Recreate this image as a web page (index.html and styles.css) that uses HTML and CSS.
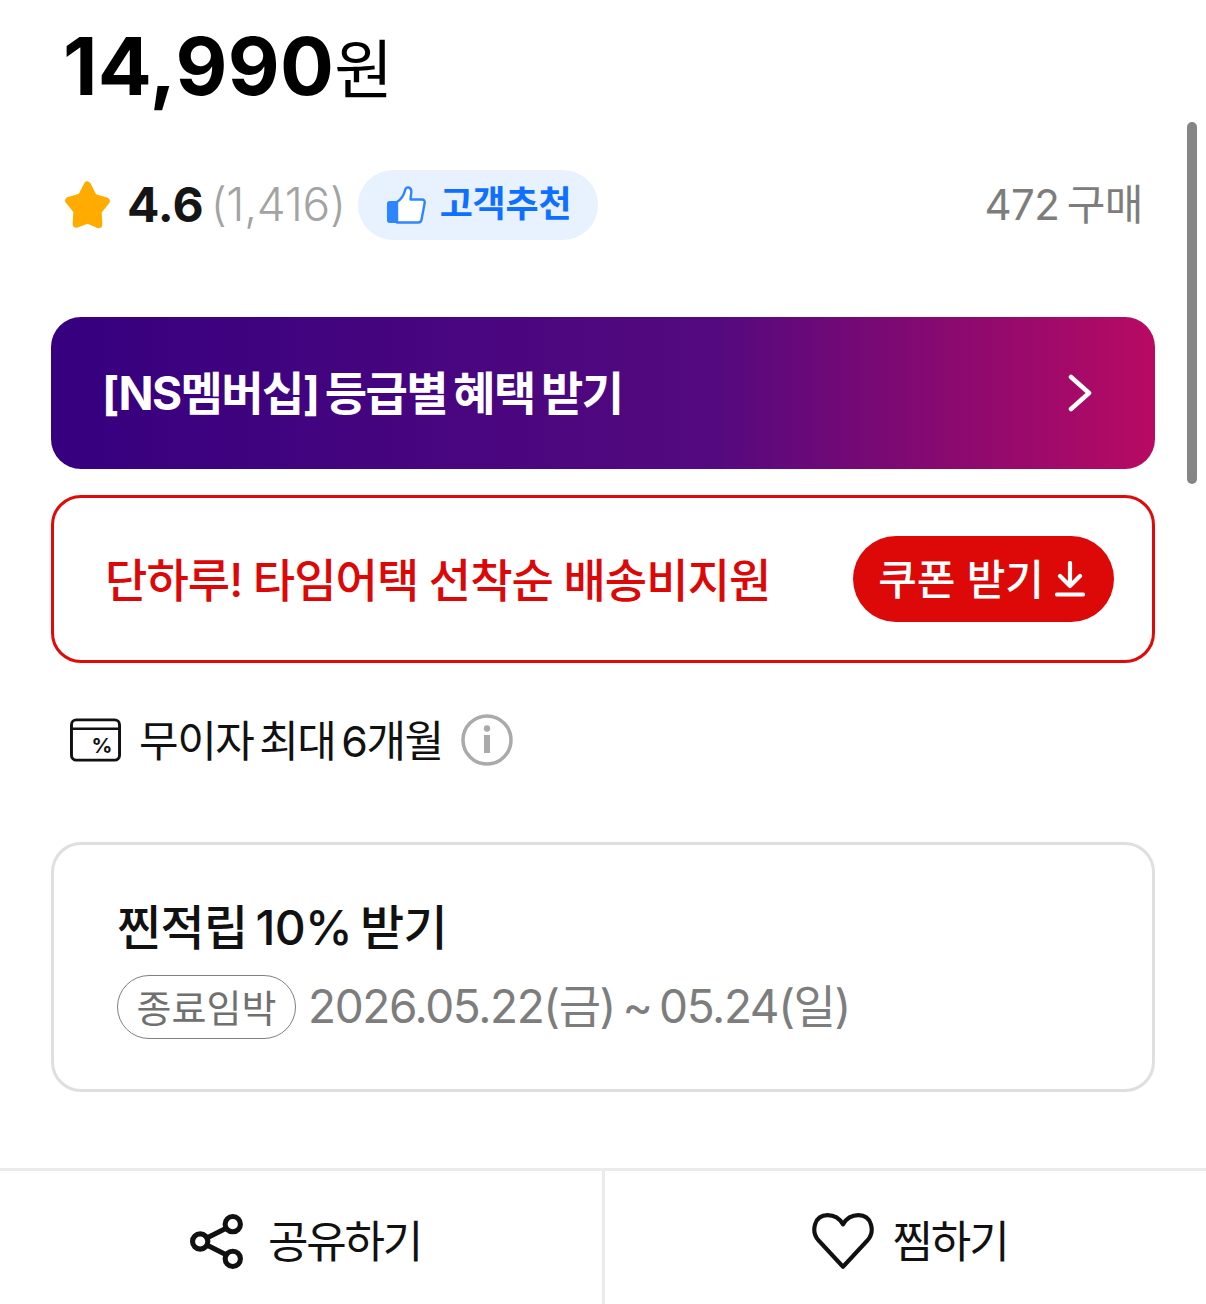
FILE: index.html
```html
<!DOCTYPE html>
<html lang="ko">
<head>
<meta charset="utf-8">
<title>상품 정보</title>
<link rel="stylesheet" href="styles.css">
</head>
<body>
<div class="scrollbar"></div>
<main class="page">
  <div class="price"><span class="price-num">14,990</span><span class="price-unit">원</span></div>
  <div class="meta">
    <svg class="star" viewBox="3 2 42 43"><path d="M24 2.500c1.400 0 2.400.9 3.100 2.300l4.600 9 9.800 2.900c2.600.8 3.400 3.400 1.700 5.500l-6.500 8 .6 10.600c.1 2.600-2.100 4.300-4.500 3.300L24 40.200l-8.800 3.500c-2.400 1-4.600-.7-4.500-3.300l.6-10.600-6.500-8c-1.700-2.100-.9-4.700 1.700-5.500l9.800-2.900 4.600-9c.7-1.400 1.700-2.300 3.100-2.300z" fill="#ffab00"/></svg>
    <span class="rating">4.6</span>
    <span class="count">(1,416)</span>
    <span class="badge">
      <svg class="thumb" viewBox="0 0 40 40"><path d="M1 18.500c0-1.400 1-2.500 2.400-2.500H11v22H3.400C2 38 1 36.900 1 35.500z" fill="#2d86ff"/><path d="M11 17c4.500-3 7-7 8-11.500.4-2 1.700-3.500 3.600-3 2 .5 2.900 2.400 2.700 4.800L24.500 14.500H36c1.900 0 3 1.500 2.700 3.300l-3.200 17c-.3 1.700-1.500 2.700-3.200 2.700H11z" fill="#fff" stroke="#2d86ff" stroke-width="2.400" stroke-linejoin="round"/></svg>
      <span class="badge-text">고객추천</span>
    </span>
    <span class="bought">472 구매</span>
  </div>
  <a class="banner">
    <span class="banner-text">[NS멤버십] 등급별 혜택 받기</span>
    <svg class="chevron" viewBox="0 0 24 38"><path d="M3 3l18 16L3 35" fill="none" stroke="#fff" stroke-width="4.500" stroke-linecap="round" stroke-linejoin="round"/></svg>
  </a>
  <div class="coupon">
    <span class="coupon-text">단하루! 타임어택 선착순 배송비지원</span>
    <span class="coupon-btn"><span class="coupon-label">쿠폰 받기</span>
      <svg class="down" viewBox="0 0 30 36"><path d="M15 2v23M5 15l10 10 10-10M2 33.500h26" fill="none" stroke="#fff" stroke-width="4.200" stroke-linecap="round" stroke-linejoin="round"/></svg>
    </span>
  </div>
  <div class="install">
    <svg class="card" viewBox="0 0 52 44"><rect x="1.500" y="1.500" width="49" height="41" rx="5" fill="none" stroke="#111" stroke-width="3"/><path d="M2 10.500h48" stroke="#111" stroke-width="2.500"/><text class="card-pct" x="32.500" y="35.500" text-anchor="middle">%</text></svg>
    <span class="install-text">무이자 최대 6개월</span>
    <svg class="info" viewBox="0 0 52 52"><circle cx="26" cy="26" r="24" fill="none" stroke="#aaa" stroke-width="3.500"/><circle cx="26" cy="14.500" r="3.200" fill="#aaa"/><rect x="23" y="21" width="6" height="18" fill="#aaa"/></svg>
  </div>
  <section class="benefit">
    <h2 class="benefit-title">찐적립 10% 받기</h2>
    <div class="benefit-row">
      <span class="tag">종료임박</span>
      <span class="date">2026.05.22(금) ~ 05.24(일)</span>
    </div>
  </section>
</main>
<footer class="actions">
  <div class="action">
    <svg class="share" viewBox="0 0 54 54"><g fill="none" stroke="#111" stroke-width="5"><circle cx="42" cy="10" r="7.500"/><circle cx="10" cy="27" r="7.500"/><circle cx="42" cy="44" r="7.500"/><path d="M35.500 14L16.500 23.500M16.500 30.500L35.500 40"/></g></svg>
    <span class="action-text">공유하기</span>
  </div>
  <div class="action action-right">
    <svg class="heart" viewBox="0 0 60 54" preserveAspectRatio="none"><path d="M30 51L6 26C-1 18 2 3 15 3c7 0 12 3.500 15 8.500C33 6.500 38 3 45 3c13 0 16 15 9 23z" fill="none" stroke="#111" stroke-width="4" stroke-linejoin="round"/></svg>
    <span class="action-text">찜하기</span>
  </div>
</footer>
</body>
</html>
```

FILE: styles.css
```css
* { box-sizing: border-box; }
html, body { margin: 0; padding: 0; }
body {
  width: 1206px;
  height: 1304px;
  overflow: hidden;
  position: relative;
  background: #fff;
  color: #111;
  font-family: Inter, "Noto Sans CJK KR", sans-serif;
}
.scrollbar {
  position: absolute;
  left: 1187px;
  top: 122px;
  width: 10px;
  height: 362px;
  border-radius: 5px;
  background: #858585;
}
.page { padding: 0 51px; height: 1168px; }
.price {
  height: 132px;
  padding: 20px 0 0 12px;
  display: flex;
  align-items: baseline;
  color: #000;
  line-height: 92px;
}
.price-num { font-size: 80px; font-weight: 700; letter-spacing: .3px; }
.price-unit { font-size: 64px; font-weight: 400; margin-left: 0; letter-spacing: -1px; transform: translateY(-2px); }
.meta {
  display: flex;
  align-items: center;
  height: 76px;
  margin-top: 35px;
  padding: 0 12px;
}
.star { width: 49px; height: 48px; margin-right: 15px; }
.rating { font-size: 48px; font-weight: 700; letter-spacing: 0; color: #151515; padding-bottom: 2px; }
.count { font-size: 46px; color: #a3a3a3; margin-left: 7px; font-weight: 300; letter-spacing: -.3px; padding-bottom: 2px; }
.badge {
  display: flex;
  align-items: center;
  margin-left: 12px;
  width: 240px;
  height: 70px;
  padding-left: 28px;
  border-radius: 35px;
  background: #e8f2ff;
}
.thumb { width: 40px; height: 40px; margin-right: 14px; }
.badge-text { font-size: 36px; font-weight: 700; color: #0f6fff; letter-spacing: -.2px; padding-bottom: 9px; }
.bought { margin-left: auto; font-size: 42px; color: #7d7d7d; letter-spacing: -.5px; word-spacing: -4px; padding-bottom: 8px; }
.banner {
  display: flex;
  align-items: center;
  justify-content: space-between;
  height: 152px;
  margin-top: 74px;
  padding: 0 63px 0 51px;
  border-radius: 30px;
  background: linear-gradient(90deg, #36007f 0%, #54097f 60%, #b80a63 100%);
}
.banner-text { font-size: 46px; font-weight: 700; color: #fff; letter-spacing: -1.600px; word-spacing: -3px; padding-bottom: 6px; }
.chevron { width: 24px; height: 38px; }
.coupon {
  display: flex;
  align-items: center;
  justify-content: space-between;
  height: 168px;
  margin-top: 26px;
  padding: 0 38px 0 51px;
  border: 3px solid #e00a0a;
  border-radius: 30px;
}
.coupon-text { font-size: 46px; font-weight: 500; color: #dc0808; letter-spacing: -.9px; word-spacing: -1px; padding-bottom: 5px; }
.coupon-btn {
  display: flex;
  align-items: center;
  gap: 11px;
  height: 86px;
  padding: 0 29px 0 25px;
  border-radius: 43px;
  background: #dd0808;
  color: #fff;
  font-size: 42px;
  font-weight: 500;
}
.coupon-label { padding-bottom: 6px; }
.down { width: 30px; height: 36px; }
.install {
  display: flex;
  align-items: center;
  height: 76px;
  margin-top: 39px;
  padding-left: 19px;
}
.card { width: 51px; height: 44px; margin-right: 18px; }
.card-pct { font: 700 21px Inter, sans-serif; fill: #111; }
.install-text { font-size: 43px; color: #111; letter-spacing: -1.400px; word-spacing: -5px; padding-bottom: 5px; }
.info { width: 52px; height: 52px; margin-left: 18px; }
.benefit {
  height: 250px;
  margin-top: 64px;
  padding: 51px 63px 0;
  border: 3px solid #dfdfdf;
  border-radius: 30px;
}
.benefit-title { margin: 0; font-size: 48px; font-weight: 500; letter-spacing: -.7px; line-height: 64px; color: #111; word-spacing: -4px; }
.benefit-row { display: flex; align-items: center; margin-top: 10px; }
.tag {
  display: flex;
  align-items: center;
  justify-content: center;
  width: 179px;
  height: 64px;
  padding-bottom: 4px;
  border: 1.500px solid #808080;
  border-radius: 32px;
  font-size: 38px;
  color: #707070;
}
.date { margin-left: 12px; font-size: 46px; color: #7d7d7d; letter-spacing: -1.400px; word-spacing: -4px; padding-bottom: 8px; }
.actions {
  display: flex;
  height: 136px;
  border-top: 3px solid #ebebeb;
}
.action {
  flex: 0 0 605px;
  display: flex;
  align-items: center;
  justify-content: center;
  gap: 23px;
  padding-left: 9px;
  border-right: 3px solid #ebebeb;
}
.action-right { flex: 1; border-right: 0; gap: 19px; padding-left: 8px; }
.action-text { font-size: 44px; color: #111; letter-spacing: -2.200px; font-weight: 400; padding-top: 2px; }
.share { width: 55px; height: 55px; margin-top: 7px; }
.heart { width: 62px; height: 58px; margin-top: 6px; }
```
